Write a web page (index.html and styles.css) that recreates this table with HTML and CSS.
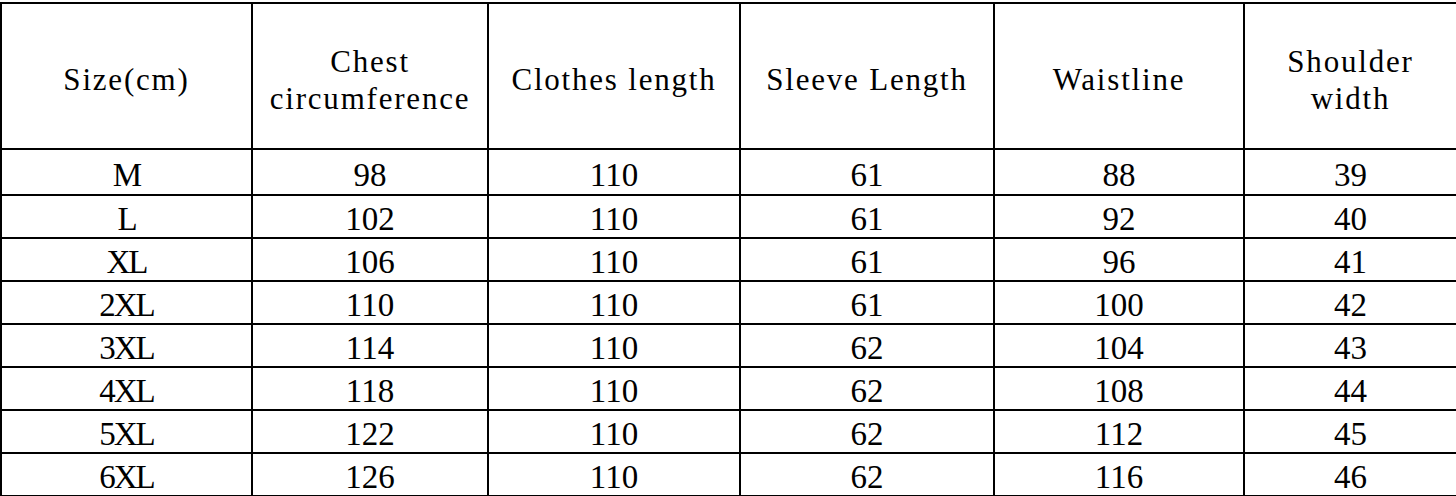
FILE: index.html
```html
<!DOCTYPE html>
<html>
<head>
<meta charset="utf-8">
<link rel="stylesheet" href="styles.css">
</head>
<body>
<table class="size-table">
  <colgroup>
    <col class="c1"><col class="c2"><col class="c3"><col class="c4"><col class="c5"><col class="c6">
  </colgroup>
  <thead>
    <tr class="head-row">
      <th>Size(cm)</th>
      <th>Chest<br>circumference</th>
      <th>Clothes length</th>
      <th>Sleeve Length</th>
      <th>Waistline</th>
      <th>Shoulder<br>width</th>
    </tr>
  </thead>
  <tbody>
    <tr class="first"><td class="size">M</td><td>98</td><td>110</td><td>61</td><td>88</td><td>39</td></tr>
    <tr><td class="size">L</td><td>102</td><td>110</td><td>61</td><td>92</td><td>40</td></tr>
    <tr><td class="size">XL</td><td>106</td><td>110</td><td>61</td><td>96</td><td>41</td></tr>
    <tr><td class="size">2XL</td><td>110</td><td>110</td><td>61</td><td>100</td><td>42</td></tr>
    <tr><td class="size">3XL</td><td>114</td><td>110</td><td>62</td><td>104</td><td>43</td></tr>
    <tr><td class="size">4XL</td><td>118</td><td>110</td><td>62</td><td>108</td><td>44</td></tr>
    <tr><td class="size">5XL</td><td>122</td><td>110</td><td>62</td><td>112</td><td>45</td></tr>
    <tr><td class="size">6XL</td><td>126</td><td>110</td><td>62</td><td>116</td><td>46</td></tr>
  </tbody>
</table>
</body>
</html>
```
FILE: styles.css
```css
html, body {
  margin: 0;
  padding: 0;
  background: #fff;
}
body {
  padding-top: 2px;
  font-family: "Liberation Serif", "Times New Roman", serif;
  color: #000;
}
.size-table {
  width: 1456px;
  border-collapse: collapse;
  table-layout: fixed;
}
.c1 { width: 251px; }
.c2 { width: 236px; }
.c3 { width: 252px; }
.c4 { width: 254px; }
.c5 { width: 250px; }
.c6 { width: 213px; }
.size-table th,
.size-table td {
  border: 2px solid #000;
  text-align: center;
  vertical-align: middle;
  padding: 0;
}
.head-row {
  height: 146px;
}
.size-table th {
  font-weight: normal;
  font-size: 31px;
  line-height: 37px;
  letter-spacing: 1.8px;
  padding-top: 7px;
}
.size-table tbody tr {
  height: 43px;
}
.size-table tbody tr.first {
  height: 46px;
}
.size-table td {
  font-size: 33px;
  line-height: 33px;
  padding-top: 6px;
}
.size-table td.size {
  letter-spacing: -2px;
}
```
